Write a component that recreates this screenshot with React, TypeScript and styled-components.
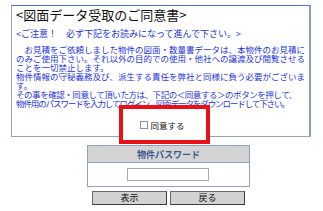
import React from "react";
import styled, { createGlobalStyle } from "styled-components";

const Global = createGlobalStyle`
  html, body { margin: 0; padding: 0; background: #ffffff; }
  body { font-family: "Noto Sans CJK JP", "Noto Sans", sans-serif; }
`;

const Page = styled.div`
  width: 323px;
  height: 211px;
  overflow: hidden;
  padding-top: 5px;
  box-sizing: border-box;
`;

const ConsentBox = styled.section`
  margin-left: 11px;
  width: 300px;
  height: 132px;
  box-sizing: border-box;
  border: 1px solid #98a4bc;
  border-top-color: #4a7ad4;
  border-right: 2px solid #8c9cc0;
  padding: 0 0 0 4px;
  display: flex;
  flex-direction: column;
`;

const Title = styled.h1`
  margin: 0;
  font-size: 13px;
  font-weight: normal;
  line-height: 18px;
  color: #111111;
  white-space: nowrap;
`;

const Notice = styled.p`
  margin: 4px 0 0 0;
  font-size: 9px;
  line-height: 11px;
  color: #1f35d8;
  white-space: nowrap;
`;

const Body = styled.div`
  margin: 6px 0 0 0;
  font-size: 8.5px;
  line-height: 9px;
  color: #1f35d8;
  white-space: nowrap;
`;

const Line = styled.span<{ $spacing?: number }>`
  display: block;
  letter-spacing: ${(p) => p.$spacing ?? 0}px;
`;

const AgreeRow = styled.div`
  margin-top: 12px;
  display: flex;
  justify-content: center;
`;

const AgreeLabel = styled.label`
  position: relative;
  display: inline-flex;
  align-items: center;
  gap: 2px;
  height: 10px;
  font-size: 8.5px;
  line-height: 10px;
  color: #111111;
  &::before {
    content: "";
    position: absolute;
    left: -21px;
    right: -25px;
    top: -15px;
    bottom: -14px;
    border: 4px solid #ea1018;
    background: #ffffff;
  }
`;

const Check = styled.span`
  position: relative;
  width: 8px;
  height: 8px;
  box-sizing: border-box;
  border: 1px solid #8a94a8;
  background: #ffffff;
`;

const LabelText = styled.span`
  position: relative;
`;

const PasswordTable = styled.div`
  margin: 8px 0 0 87px;
  width: 163px;
  border: 1px solid #8fa2c4;
  box-sizing: border-box;
`;

const PasswordHead = styled.div`
  height: 16px;
  background: #d4d4d4;
  border-bottom: 1px solid #8fa2c4;
  display: flex;
  align-items: center;
  justify-content: center;
  font-size: 9px;
  font-weight: bold;
  color: #3a5a8c;
`;

const PasswordCell = styled.div`
  height: 23px;
  display: flex;
  align-items: center;
  justify-content: center;
  background: #ffffff;
`;

const PasswordInput = styled.input`
  width: 82px;
  height: 13px;
  box-sizing: border-box;
  border: 1px solid #a4acbc;
  padding: 0;
  margin: 0 0 0 -2px;
  outline: none;
`;

const ButtonRow = styled.div`
  margin: 4px 0 0 92px;
  display: flex;
  gap: 3px;
`;

const ActionButton = styled.button`
  width: 75px;
  height: 14px;
  box-sizing: border-box;
  padding: 0;
  background: #d2d2d2;
  border: 1px solid #3c3c3c;
  border-top-color: #6a6a6a;
  border-left-color: #6a6a6a;
  font-family: "Noto Sans CJK JP", "Noto Sans", sans-serif;
  font-size: 9px;
  line-height: 12px;
  color: #111111;
`;

export default function App() {
  return (
    <Page>
      <Global />
      <ConsentBox>
        <Title>&lt;図面データ受取のご同意書&gt;</Title>
        <Notice>&lt;ご注意！　必ず下記をお読みになって進んで下さい。&gt;</Notice>
        <Body>
          <Line>　お見積をご依頼しました物件の図面・数量書データは、本物件のお見積に</Line>
          <Line>のみご使用下さい。それ以外の目的での使用・他社への譲渡及び閲覧させる</Line>
          <Line>ことを一切禁止します。</Line>
          <Line>物件情報の守秘義務及び、派生する責任を弊社と同様に負う必要がございま</Line>
          <Line>す。</Line>
          <Line $spacing={-0.45}>その事を確認・同意して頂いた方は、下記の＜同意する＞のボタンを押して、</Line>
          <Line $spacing={-1.1}>物件用のパスワードを入力してログイン、図面データをダウンロードして下さい。</Line>
        </Body>
        <AgreeRow>
          <AgreeLabel>
            <Check />
            <LabelText>同意する</LabelText>
          </AgreeLabel>
        </AgreeRow>
      </ConsentBox>
      <PasswordTable>
        <PasswordHead>物件パスワード</PasswordHead>
        <PasswordCell>
          <PasswordInput type="password" />
        </PasswordCell>
      </PasswordTable>
      <ButtonRow>
        <ActionButton>表示</ActionButton>
        <ActionButton>戻る</ActionButton>
      </ButtonRow>
    </Page>
  );
}
